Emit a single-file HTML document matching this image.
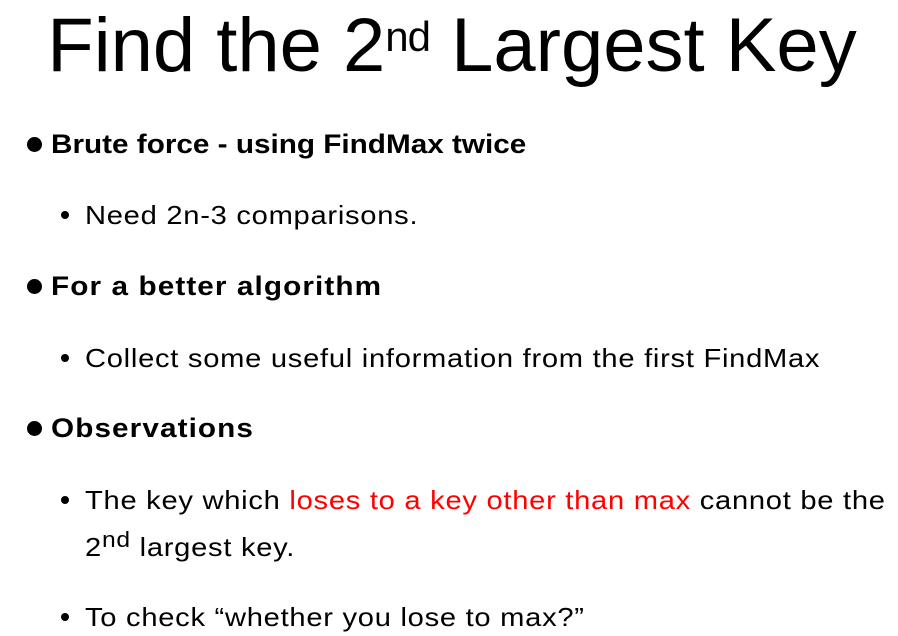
<!DOCTYPE html>
<html><head><meta charset="utf-8"><style>
body{margin:0;width:898px;height:636px;background:#fff;overflow:hidden;position:relative;font-family:"Liberation Sans",Arial,sans-serif;color:#000}
div{position:absolute;white-space:nowrap;line-height:30px;transform-origin:0 0}
.t{left:3px;width:898px;text-align:center;font-size:76px;line-height:80px;top:6px}
.t sup{font-size:42px;vertical-align:0;position:relative;top:-20px;letter-spacing:-1px}
.l1{left:51px;font-size:27px;font-weight:bold;letter-spacing:1px;transform:scaleX(1.1)}
.l2{left:85px;font-size:26px;letter-spacing:0.65px;transform:scaleX(1.12)}
.d1{position:absolute;left:27px;width:15px;height:15px;border-radius:50%;background:#000}
.d2{position:absolute;left:61px;width:8px;height:8px;border-radius:50%;background:#000}
.r{color:#f00}
.s{font-size:22px;position:relative;top:-9px}
</style></head><body>
<div class="t">Find the 2<sup>nd</sup> Largest Key</div>
<span class="d1" style="top:137px"></span>
<div class="l1" style="top:129px;letter-spacing:0">Brute force - using FindMax twice</div>
<span class="d2" style="top:211px"></span>
<div class="l2" style="top:200px">Need 2n-3 comparisons.</div>
<span class="d1" style="top:279px"></span>
<div class="l1" style="top:271px">For a better algorithm</div>
<span class="d2" style="top:354px"></span>
<div class="l2" style="top:343px">Collect some useful information from the first FindMax</div>
<span class="d1" style="top:421px"></span>
<div class="l1" style="top:413px">Observations</div>
<span class="d2" style="top:496px"></span>
<div class="l2" style="top:485px">The key which <span class="r">loses to a key other than max</span> cannot be the</div>
<div class="l2" style="top:532px">2<span class="s">nd</span> largest key.</div>
<span class="d2" style="top:613px"></span>
<div class="l2" style="top:602px">To check “whether you lose to max?”</div>
</body></html>
